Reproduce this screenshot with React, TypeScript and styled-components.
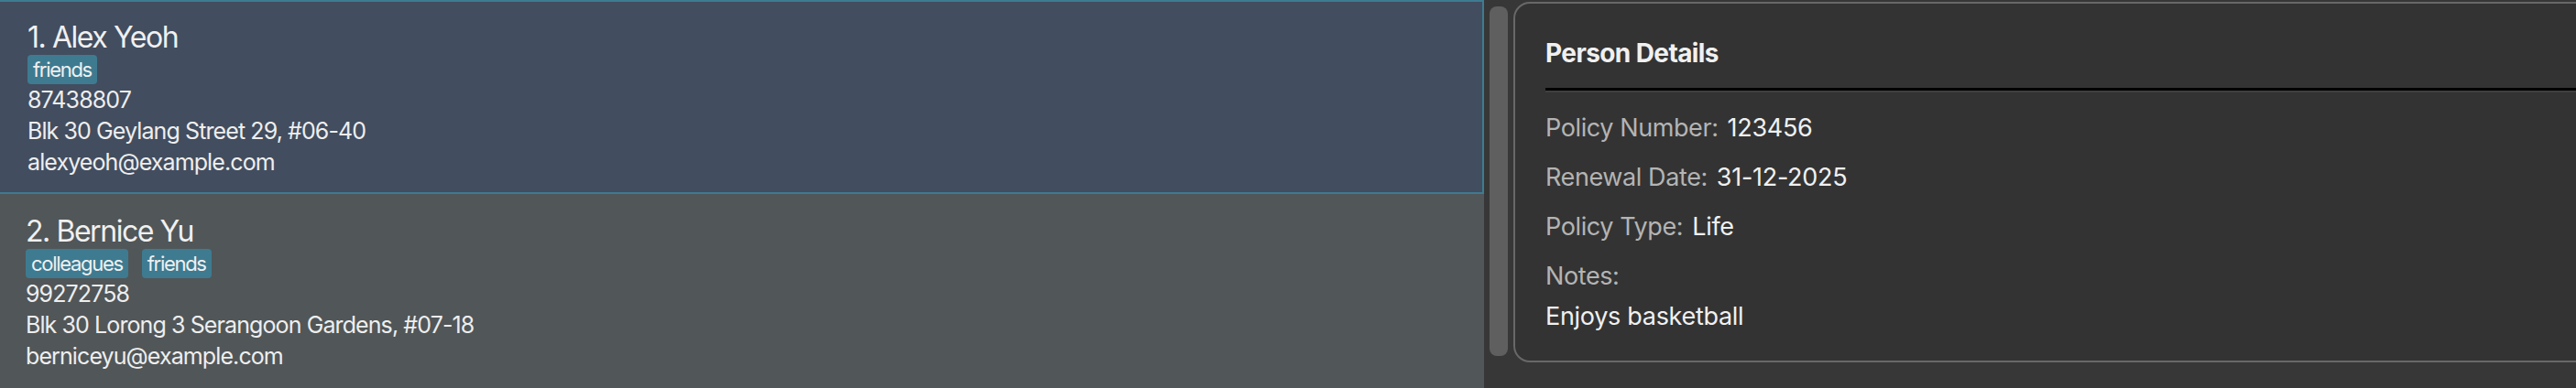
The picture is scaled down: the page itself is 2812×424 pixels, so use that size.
import React from "react";
import styled, { createGlobalStyle } from "styled-components";

const GlobalStyle = createGlobalStyle`
  html, body {
    margin: 0;
    padding: 0;
    background: #383838;
    overflow: hidden;
  }
  body {
    font-family: Inter, "Noto Sans", sans-serif;
    color: #eeeeee;
  }
`;

const Shell = styled.div`
  display: flex;
  width: 2812px;
  height: 424px;
  overflow: hidden;
  background: #373737;
`;

const ListColumn = styled.div`
  width: 1620px;
  flex: 0 0 1620px;
  display: flex;
  flex-direction: column;
  overflow: hidden;
`;

const Card = styled.div<{ $selected?: boolean }>`
  flex: 0 0 auto;
  background: ${(p) => (p.$selected ? "#424d5f" : "#515658")};
  border-top: 2px solid ${(p) => (p.$selected ? "#3e7b91" : "#515658")};
  border-right: 2px solid ${(p) => (p.$selected ? "#3e7b91" : "#515658")};
  border-bottom: 2px solid ${(p) => (p.$selected ? "#3e7b91" : "#515658")};
  padding: 20px 30px 16px ${(p) => (p.$selected ? "30px" : "28px")};
  display: flex;
  flex-direction: column;
`;

const Name = styled.div`
  font-size: 32px;
  line-height: 38px;
  color: #f0f0f0;
  letter-spacing: -1.45px;
`;

const TagRow = styled.div`
  display: flex;
  gap: 15px;
  height: 32px;
`;

const Tag = styled.span`
  display: inline-flex;
  align-items: center;
  height: 32px;
  padding: 0 6px;
  background: #3e7b91;
  border-radius: 4px;
  font-size: 22px;
  color: #f0f0f0;
  letter-spacing: -1.3px;
`;

const Line = styled.div`
  font-size: 25px;
  line-height: 34px;
  color: #eeeeee;
  letter-spacing: -0.9px;
`;

const ScrollTrack = styled.div`
  flex: 0 0 32px;
  padding: 7px 6px 35px 6px;
  box-sizing: border-box;
  display: flex;
`;

const Thumb = styled.div`
  flex: 1;
  background: #5f5f5f;
  border-radius: 8px;
`;

const DetailsPanel = styled.div`
  flex: 1 0 auto;
  margin: 2px -30px 0 0;
  height: 394px;
  box-sizing: border-box;
  background: #333333;
  border: 2px solid #686868;
  border-radius: 18px;
  padding: 37px 0 0 33px;
  display: flex;
  flex-direction: column;
`;

const Title = styled.div`
  font-size: 28px;
  line-height: 34px;
  font-weight: 700;
  color: #f0f0f0;
  letter-spacing: -0.6px;
`;

const Divider = styled.div`
  margin-top: 21px;
  height: 0;
  border-top: 3px solid #000000;
  border-bottom: 2px solid #404040;
`;

const Rows = styled.div`
  margin-top: 21px;
  display: flex;
  flex-direction: column;
  gap: 18px;
`;

const Row = styled.div`
  display: flex;
  align-items: baseline;
  gap: 10px;
  line-height: 36px;
`;

const Label = styled.span`
  font-size: 27px;
  color: #b4b4b4;
  letter-spacing: -0.4px;
`;

const Value = styled.span`
  font-size: 27px;
  color: #f0f0f0;
  letter-spacing: -0.3px;
`;

const NotesBlock = styled.div`
  display: flex;
  flex-direction: column;
  gap: 8px;
  line-height: 36px;
`;

type Person = {
  name: string;
  tags: string[];
  phone: string;
  address: string;
  email: string;
};

const people: Person[] = [
  {
    name: "Alex Yeoh",
    tags: ["friends"],
    phone: "87438807",
    address: "Blk 30 Geylang Street 29, #06-40",
    email: "alexyeoh@example.com",
  },
  {
    name: "Bernice Yu",
    tags: ["colleagues", "friends"],
    phone: "99272758",
    address: "Blk 30 Lorong 3 Serangoon Gardens, #07-18",
    email: "berniceyu@example.com",
  },
];

export default function App() {
  return (
    <>
      <GlobalStyle />
      <Shell>
        <ListColumn>
          {people.map((p, i) => (
            <Card key={p.name} $selected={i === 0}>
              <Name>
                {i + 1}. {p.name}
              </Name>
              <TagRow>
                {p.tags.map((t) => (
                  <Tag key={t}>{t}</Tag>
                ))}
              </TagRow>
              <Line>{p.phone}</Line>
              <Line>{p.address}</Line>
              <Line>{p.email}</Line>
            </Card>
          ))}
        </ListColumn>
        <ScrollTrack>
          <Thumb />
        </ScrollTrack>
        <DetailsPanel>
          <Title>Person Details</Title>
          <Divider />
          <Rows>
            <Row>
              <Label>Policy Number:</Label>
              <Value>123456</Value>
            </Row>
            <Row>
              <Label>Renewal Date:</Label>
              <Value>31-12-2025</Value>
            </Row>
            <Row>
              <Label>Policy Type:</Label>
              <Value>Life</Value>
            </Row>
            <NotesBlock>
              <Label>Notes:</Label>
              <Value>Enjoys basketball</Value>
            </NotesBlock>
          </Rows>
        </DetailsPanel>
      </Shell>
    </>
  );
}
